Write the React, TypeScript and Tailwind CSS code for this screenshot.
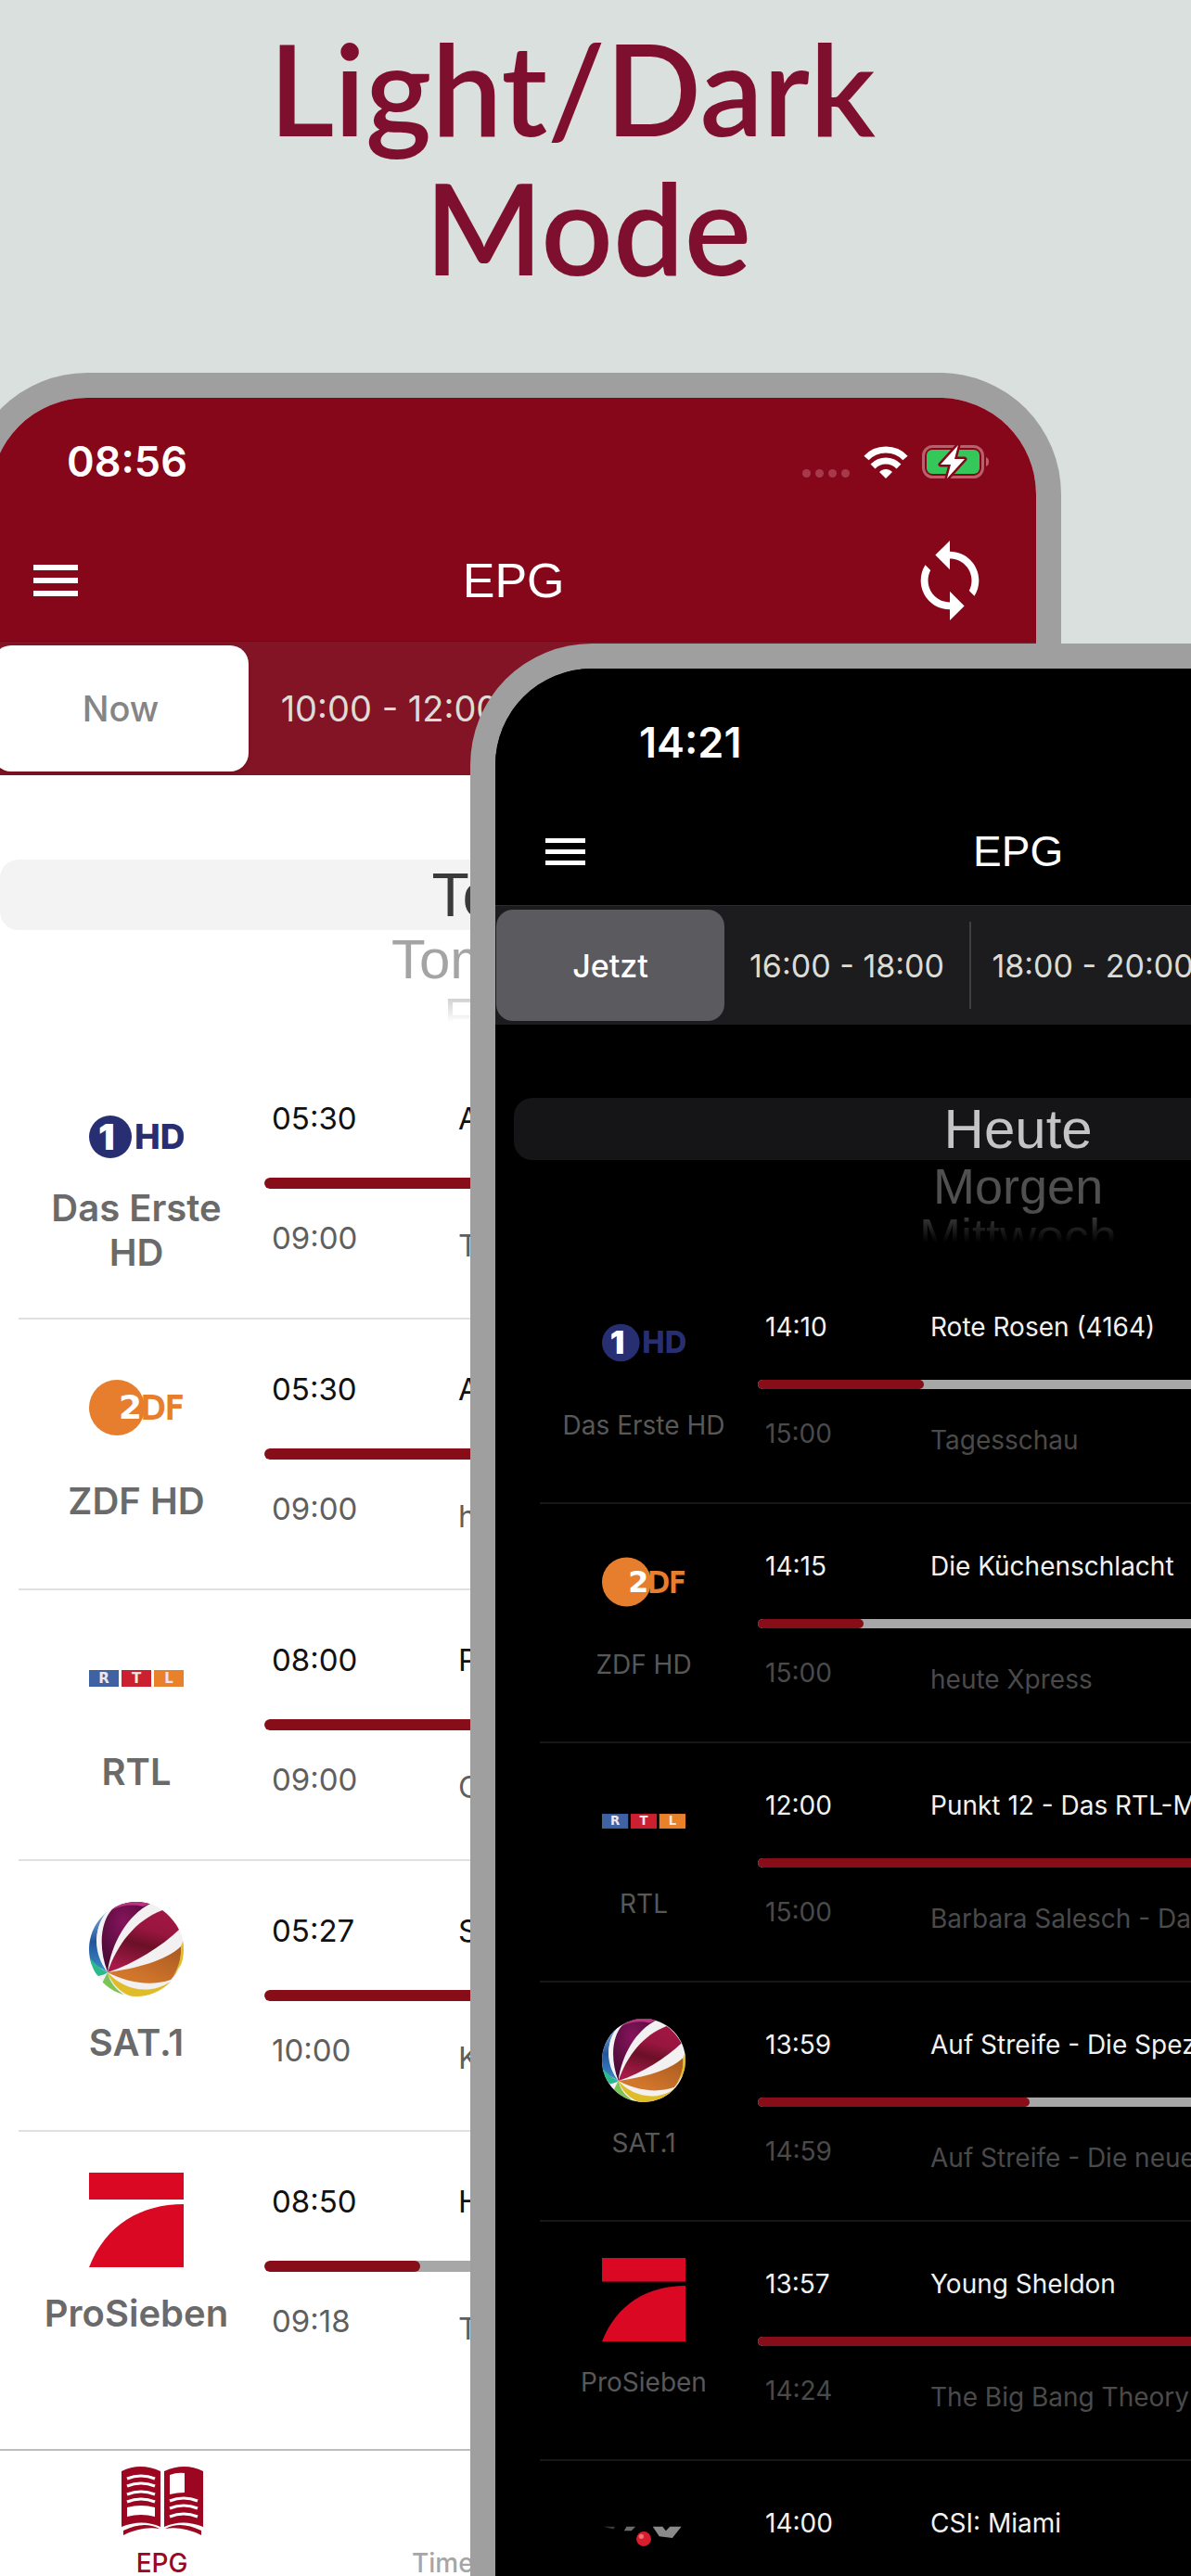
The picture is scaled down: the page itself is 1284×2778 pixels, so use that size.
import type { ReactNode } from "react";
import clsx from "clsx";
import { MdSync } from "react-icons/md";

type Programme = {
  name: string;
  logo: ReactNode;
  start: string;
  title: string;
  nextStart: string;
  nextTitle: string;
  progress: number;
};

const light = {
  screen: "bg-white",
  header: "bg-[#86061a]",
  status: "h-[132px] pt-[6px] pl-[82px] pr-[50px]",
  nav: "h-[130px] px-[46px] text-[52px]",
  bars: "w-12 gap-2",
  bar: "h-[6px]",
  segments: "h-[145px] border-[#6e0a18] bg-[#831425] px-[2px] py-1 text-[38px] text-[#dddcd8]",
  segmentActive: "w-[276px] rounded-[20px] bg-white text-[#858585] shadow-md",
  segment: "w-[304px] border-[#9a4450]",
  picker: "h-[295px] pt-[91px]",
  band: "mx-[10px] h-[76px] bg-[#f3f3f3] text-[66px] text-[#3a3a3a]",
  rest: "h-[100px]",
  second: "h-16 text-[60px] text-[#a4a4a4]",
  third: "h-14 text-[54px] text-[#b8b8b8]",
  row: "ml-[30px] h-[292px] border-[#e0e0e0]",
  channel: "w-[254px] px-3 pt-[44px]",
  logo: "size-[102px]",
  name: "h-[100px] text-[40px] leading-[48px] font-semibold text-[#6a6a6a]",
  now: "h-[139px] pt-[55px] text-[#111111]",
  next: "pt-[33px] text-[#5f5f5f]",
  text: "text-[33px] leading-[40px]",
  time: "w-[201px]",
  nextTitle: "pt-[8px]",
  track: "h-[12px]",
};

const dark: typeof light = {
  screen: "bg-black",
  header: "bg-black",
  status: "h-[139px] pt-[20px] pl-[155px] pr-[50px]",
  nav: "h-[116px] px-[54px] text-[46px]",
  bars: "w-[43px] gap-[7px]",
  bar: "h-[5px]",
  segments: "h-[129px] border-[#2c2c2e] bg-[#1c1c1e] px-px py-1 text-[34px] text-[#dcdcd6]",
  segmentActive: "w-[246px] rounded-[18px] bg-[#5b5a5f] text-white",
  segment: "w-[264px] border-[#3f3f42]",
  picker: "h-[259px] pt-[79px]",
  band: "mx-[20px] h-[67px] bg-[#151517] text-[60px] text-[#c4c4c4]",
  rest: "h-[89px]",
  second: "h-14 text-[54px] text-[#505050]",
  third: "h-[52px] text-[54px] text-[#484848]",
  row: "ml-[48px] h-[258px] border-[#171717]",
  channel: "w-[224px] px-3 pt-[39px]",
  logo: "size-[90px]",
  name: "h-[88px] text-[28px] leading-[36px] text-[#585858]",
  now: "h-[124px] pt-[49px] text-[#f2f2f2]",
  next: "pt-[30px] text-[#4a4a4a]",
  text: "text-[28px] leading-[36px]",
  time: "w-[178px]",
  nextTitle: "pt-[7px]",
  track: "h-[10px]",
};

function DasErsteLogo() {
  return (
    <svg viewBox="0 0 102 102" className="size-full">
      <circle cx="23" cy="51" r="23" fill="#272f72" />
      <text x="10" y="65" fontFamily="Inter, sans-serif" fontWeight="900" fontSize="39" fill="#fff">1</text>
      <text x="49" y="64" fontFamily="Inter, sans-serif" fontWeight="800" fontSize="37" fill="#272f72">HD</text>
    </svg>
  );
}

function ZdfLogo() {
  return (
    <svg viewBox="0 0 102 102" className="size-full">
      <circle cx="30" cy="51" r="30" fill="#e67e2e" />
      <text x="56" y="63" fontFamily="DejaVu Sans, sans-serif" fontSize="34" fill="#e67e2e" stroke="#e67e2e" strokeWidth="2">DF</text>
      <text x="32" y="63" fontFamily="DejaVu Sans, sans-serif" fontWeight="700" fontSize="36" fill="#fff">2</text>
    </svg>
  );
}

function RtlLogo() {
  const tiles = [
    { x: 0, fill: "#3f62a2", letter: "R" },
    { x: 35, fill: "#cb2030", letter: "T" },
    { x: 70, fill: "#e9802a", letter: "L" },
  ];
  return (
    <svg viewBox="0 0 102 102" className="size-full">
      {tiles.map((t) => (
        <g key={t.letter}>
          <rect x={t.x} y="42" width="32" height="18" fill={t.fill} />
          <text x={t.x + 16} y="56" textAnchor="middle" fontFamily="DejaVu Sans, sans-serif" fontWeight="700" fontSize="15" fill="#f0e6ea">
            {t.letter}
          </text>
        </g>
      ))}
    </svg>
  );
}

function SatLogo() {
  return (
    <svg viewBox="0 0 102 102" className="size-full">
      <defs>
        <clipPath id="ball"><circle cx="51" cy="51" r="51" /></clipPath>
        <radialGradient id="plum" cx="0.45" cy="0.3" r="0.6">
          <stop offset="0" stopColor="#86145c" />
          <stop offset="1" stopColor="#4e0b38" />
        </radialGradient>
        <linearGradient id="crimson" x1="0.8" y1="0" x2="0.5" y2="1">
          <stop offset="0" stopColor="#a31643" />
          <stop offset="0.35" stopColor="#98163f" />
          <stop offset="0.6" stopColor="#6b1027" />
          <stop offset="1" stopColor="#a51a48" />
        </linearGradient>
        <linearGradient id="amber" x1="1" y1="0" x2="0.3" y2="0.8">
          <stop offset="0" stopColor="#a85a20" />
          <stop offset="1" stopColor="#d2762c" />
        </linearGradient>
        <linearGradient id="sea" x1="0" y1="0" x2="0" y2="1">
          <stop offset="0" stopColor="#7fb0dc" />
          <stop offset="0.5" stopColor="#22559c" />
          <stop offset="1" stopColor="#3c8cc8" />
        </linearGradient>
      </defs>
      <g clipPath="url(#ball)">
        <rect width="102" height="102" fill="#f2f0f0" />
        <path d="M20 76C10 50 12 22 25 8C36 -2 52 -2 66 2C42 14 24 44 20 76Z" fill="url(#plum)" />
        <path d="M24 9C36 -1 52 -3 66 2L58 5C46 2 34 4 24 9Z" fill="#b8347e" />
        <path d="M20 76C30 46 50 20 79 9C86 14 93 22 97 30C78 48 50 66 20 76Z" fill="url(#crimson)" />
        <path d="M20 76C50 72 82 64 99 48C100 64 96 76 88 84C64 92 40 86 20 76Z" fill="url(#amber)" />
        <path d="M99 48L103 38L103 62L88 84C95 74 100 62 99 48Z" fill="#e2bc28" />
        <path d="M20 76C36 94 64 102 88 86L76 102H46C34 98 24 88 20 76Z" fill="#dfbc28" />
        <path d="M20 76C4 56 4 28 20 10L0 20V66C8 68 14 72 20 76Z" fill="url(#sea)" />
        <path d="M20 76C10 54 8 28 22 10L18 12C4 30 6 56 20 76Z" fill="#f4f4f8" />
        <path d="M20 76C12 72 6 66 0 60V70L10 80C14 79 18 78 20 76Z" fill="#2cb990" />
        <path d="M20 76C18 80 16 84 14 88L26 98L40 102C28 94 22 86 20 76Z" fill="#7cc455" />
      </g>
    </svg>
  );
}

function ProSiebenLogo() {
  return (
    <svg viewBox="0 0 102 102" className="size-full">
      <rect width="102" height="29" fill="#da0822" />
      <path d="M0 102C18 56 56 34 102 34V102Z" fill="#da0822" />
    </svg>
  );
}

function VoxLogo() {
  return (
    <svg viewBox="0 0 102 102" className="size-full">
      <path d="M2 36H16L14 39Z" fill="#3a3a3a" />
      <path d="M30 36H41L36 41H27Z" fill="#6a6a6a" />
      <path d="M62 36H74L78 41L83 36H97L86 50L70 48Z" fill="#8a8a8a" />
      <circle cx="51" cy="51" r="9" fill="#d81e2c" />
      <circle cx="48" cy="48" r="3" fill="#f0707a" />
    </svg>
  );
}

function WifiIcon() {
  return (
    <svg viewBox="0 0 48 35" className="h-[35px] w-12" fill="none" stroke="#fff" strokeWidth="7">
      <path d="M3 13C14 1 34 1 45 13" />
      <path d="M10 22C18 14 30 14 38 22" />
      <path d="M24 35L17 28C21 24 27 24 31 28Z" fill="#fff" stroke="none" />
    </svg>
  );
}

function BatteryIcon() {
  return (
    <svg viewBox="0 0 73 38" className="h-[38px] w-[73px]">
      <rect x="1.5" y="2.5" width="64" height="33" rx="10" fill="none" stroke="#b9606c" strokeWidth="3" />
      <rect x="5" y="6" width="57" height="26" rx="6" fill="#34c759" />
      <path d="M69 14C73 15 73 23 69 24Z" fill="#b9606c" />
      <path d="M39 1L20 22H31L27 37L46 16H35Z" fill="#fff" stroke="#86061a" strokeWidth="5" strokeLinejoin="round" paintOrder="stroke" />
    </svg>
  );
}

function BookIcon() {
  return (
    <svg viewBox="0 0 88 74" className="h-[74px] w-[88px]">
      <g fill="#9c0621">
        <path d="M0 5Q20 -5 42 5V65Q22 56 0 65Z" />
        <path d="M46 5Q68 -5 88 5V65Q66 56 46 65Z" />
        <path d="M2 69Q24 58 41 67Q22 64 2 74Z" />
        <path d="M86 69Q64 58 47 67Q66 64 86 74Z" />
      </g>
      <g fill="none" stroke="#fff" strokeWidth="3">
        <path d="M6 13Q21 7 36 13M6 21Q21 15 36 21M6 30Q21 24 36 30M6 38Q21 32 36 38" />
        <path d="M52 37Q67 31 82 37M52 45Q67 39 82 45M52 54Q67 48 82 54" />
      </g>
      <path d="M6 44Q21 40 36 44V54Q21 50 6 54Z" fill="#fff" />
      <path d="M52 9Q60 6 68 7V28Q60 28 52 30Z" fill="#fff" />
    </svg>
  );
}

const lightRows: Programme[] = [
  { name: "Das Erste HD", logo: <DasErsteLogo />, start: "05:30", title: "ARD", nextStart: "09:00", nextTitle: "Tagesschau", progress: 98 },
  { name: "ZDF HD", logo: <ZdfLogo />, start: "05:30", title: "ARD", nextStart: "09:00", nextTitle: "heute Xpress", progress: 98 },
  { name: "RTL", logo: <RtlLogo />, start: "08:00", title: "Punkt 8", nextStart: "09:00", nextTitle: "GZSZ", progress: 93 },
  { name: "SAT.1", logo: <SatLogo />, start: "05:27", title: "SAT.1", nextStart: "10:00", nextTitle: "Klinik", progress: 76 },
  { name: "ProSieben", logo: <ProSiebenLogo />, start: "08:50", title: "How", nextStart: "09:18", nextTitle: "The", progress: 21 },
];

const darkRows: Programme[] = [
  { name: "Das Erste HD", logo: <DasErsteLogo />, start: "14:10", title: "Rote Rosen (4164)", nextStart: "15:00", nextTitle: "Tagesschau", progress: 22 },
  { name: "ZDF HD", logo: <ZdfLogo />, start: "14:15", title: "Die Küchenschlacht", nextStart: "15:00", nextTitle: "heute Xpress", progress: 14 },
  { name: "RTL", logo: <RtlLogo />, start: "12:00", title: "Punkt 12 - Das RTL-Mittagsjournal", nextStart: "15:00", nextTitle: "Barbara Salesch - Das Strafgericht", progress: 78 },
  { name: "SAT.1", logo: <SatLogo />, start: "13:59", title: "Auf Streife - Die Spezialisten", nextStart: "14:59", nextTitle: "Auf Streife - Die neuen Einsätze", progress: 36 },
  { name: "ProSieben", logo: <ProSiebenLogo />, start: "13:57", title: "Young Sheldon", nextStart: "14:24", nextTitle: "The Big Bang Theory", progress: 88 },
  { name: "VOX", logo: <VoxLogo />, start: "14:00", title: "CSI: Miami", nextStart: "14:55", nextTitle: "Shopping Queen", progress: 34 },
];

function Row({ p, theme }: { p: Programme; theme: typeof light }) {
  return (
    <li className={clsx("flex gap-[11px] border-b-2", theme.row)}>
      <div className={clsx("flex shrink-0 flex-col items-center", theme.channel)}>
        <div className={theme.logo}>{p.logo}</div>
        <div className={clsx("flex items-center text-center", theme.name)}>{p.name}</div>
      </div>
      <div className={clsx("mr-[30px] min-w-0 flex-1 whitespace-nowrap", theme.text)}>
        <div className={clsx("flex pl-2", theme.now)}>
          <span className={clsx("shrink-0", theme.time)}>{p.start}</span>
          <span>{p.title}</span>
        </div>
        <div className={clsx("overflow-hidden rounded-full bg-[#a7a7a7]", theme.track)}>
          <div className="h-full rounded-full bg-[#870e18]" style={{ width: `${p.progress}%` }} />
        </div>
        <div className={clsx("flex pl-2", theme.next)}>
          <span className={clsx("shrink-0", theme.time)}>{p.nextStart}</span>
          <span className={theme.nextTitle}>{p.nextTitle}</span>
        </div>
      </div>
    </li>
  );
}

type PhoneProps = {
  theme: typeof light;
  clock: string;
  segments: string[];
  days: string[];
  rows: Programme[];
  statusIcons?: ReactNode;
  footer?: ReactNode;
  className: string;
};

function Phone({ theme, clock, segments, days, rows, statusIcons, footer, className }: PhoneProps) {
  return (
    <section className={clsx("isolate col-start-1 row-start-1 w-[92%] overflow-hidden rounded-t-[131px] border-[27px] border-b-0 border-[#9f9f9f]", theme.screen, className)}>
      <header className={clsx("text-white", theme.header)}>
        <div className={clsx("flex items-center justify-between", theme.status)}>
          <span className="text-[45px] font-semibold">{clock}</span>
          {statusIcons}
        </div>
        <div className={clsx("grid grid-cols-3 items-center", theme.nav)}>
          <button aria-label="Menu" className={clsx("flex flex-col", theme.bars)}>
            <span className={clsx("bg-white", theme.bar)} />
            <span className={clsx("bg-white", theme.bar)} />
            <span className={clsx("bg-white", theme.bar)} />
          </button>
          <h2 className="text-center font-['Liberation_Sans',sans-serif]">EPG</h2>
          <button aria-label="Refresh" className="justify-self-end">
            <MdSync className="size-[94px]" />
          </button>
        </div>
      </header>
      <div className={clsx("flex items-stretch overflow-hidden border-t font-medium", theme.segments)}>
        {segments.map((s, i) => (
          <button
            key={s}
            className={clsx("flex shrink-0 items-center justify-center whitespace-nowrap", i === 0 ? theme.segmentActive : theme.segment)}
          >
            {i > 1 && <span className="mr-auto h-[94px] w-[2px] bg-[#3f3f42]" />}
            <span className={clsx(i > 1 && "mr-auto", i > 0 && "font-normal")}>{s}</span>
          </button>
        ))}
      </div>
      <ul className={clsx("text-center font-['Liberation_Sans',sans-serif]", theme.picker)}>
        <li className={clsx("flex items-center justify-center rounded-[20px]", theme.band)}>{days[0]}</li>
        <li className={clsx("overflow-hidden mask-b-from-60% mask-b-to-100%", theme.rest)}>
          <div className={clsx("flex items-center justify-center", theme.second)}>{days[1]}</div>
          <div className={clsx("flex items-center justify-center", theme.third)}>{days[2]}</div>
        </li>
      </ul>
      <ul>
        {rows.map((p) => (
          <Row key={p.name} p={p} theme={theme} />
        ))}
      </ul>
      {footer}
    </section>
  );
}

export default function App() {
  return (
    <main className="flex h-screen flex-col overflow-hidden bg-[#dae0de] font-['Inter',sans-serif]">
      <h1 className="pt-5 pr-[50px] pb-[82px] text-center font-['Lato',sans-serif] text-[136px] leading-[150px] font-semibold whitespace-pre text-[#7f0f2f]">
        {"Light/Dark\n Mode"}
      </h1>
      <div className="grid flex-1 grid-cols-1 items-start">
        <Phone
          theme={light}
          className="-ml-[37px]"
          clock="08:56"
          segments={["Now", "10:00 - 12:00", "12:00 - 14:00"]}
          days={["Today", "Tomorrow", "Friday"]}
          rows={lightRows}
          statusIcons={
            <div className="flex items-center gap-[15px]">
              <div className="mt-6 flex gap-[5px]">
                {[0, 1, 2, 3].map((i) => (
                  <span key={i} className="size-[9px] rounded-full bg-[#a43a4b]" />
                ))}
              </div>
              <WifiIcon />
              <BatteryIcon />
            </div>
          }
          footer={
            <nav className="-mt-[2px] bg-white pt-[52px]">
              <div className="grid grid-cols-3 border-t-2 border-[#bdbdbd] pt-[17px] pr-5 text-[28px] leading-[36px] font-medium">
                <a href="#epg" className="flex flex-col items-center gap-3 text-[#9c0621]">
                  <BookIcon />
                  EPG
                </a>
                <a href="#timer" className="flex flex-col items-center justify-end text-[#a6a6a6]">Time Schedule</a>
                <a href="#more" className="flex flex-col items-center justify-end text-[#a6a6a6]">More</a>
              </div>
            </nav>
          }
        />
        <Phone
          theme={dark}
          className="relative z-10 mt-[292px] ml-[507px]"
          clock="14:21"
          segments={["Jetzt", "16:00 - 18:00", "18:00 - 20:00", "20:00 - 22:00"]}
          days={["Heute", "Morgen", "Mittwoch"]}
          rows={darkRows}
        />
      </div>
    </main>
  );
}
